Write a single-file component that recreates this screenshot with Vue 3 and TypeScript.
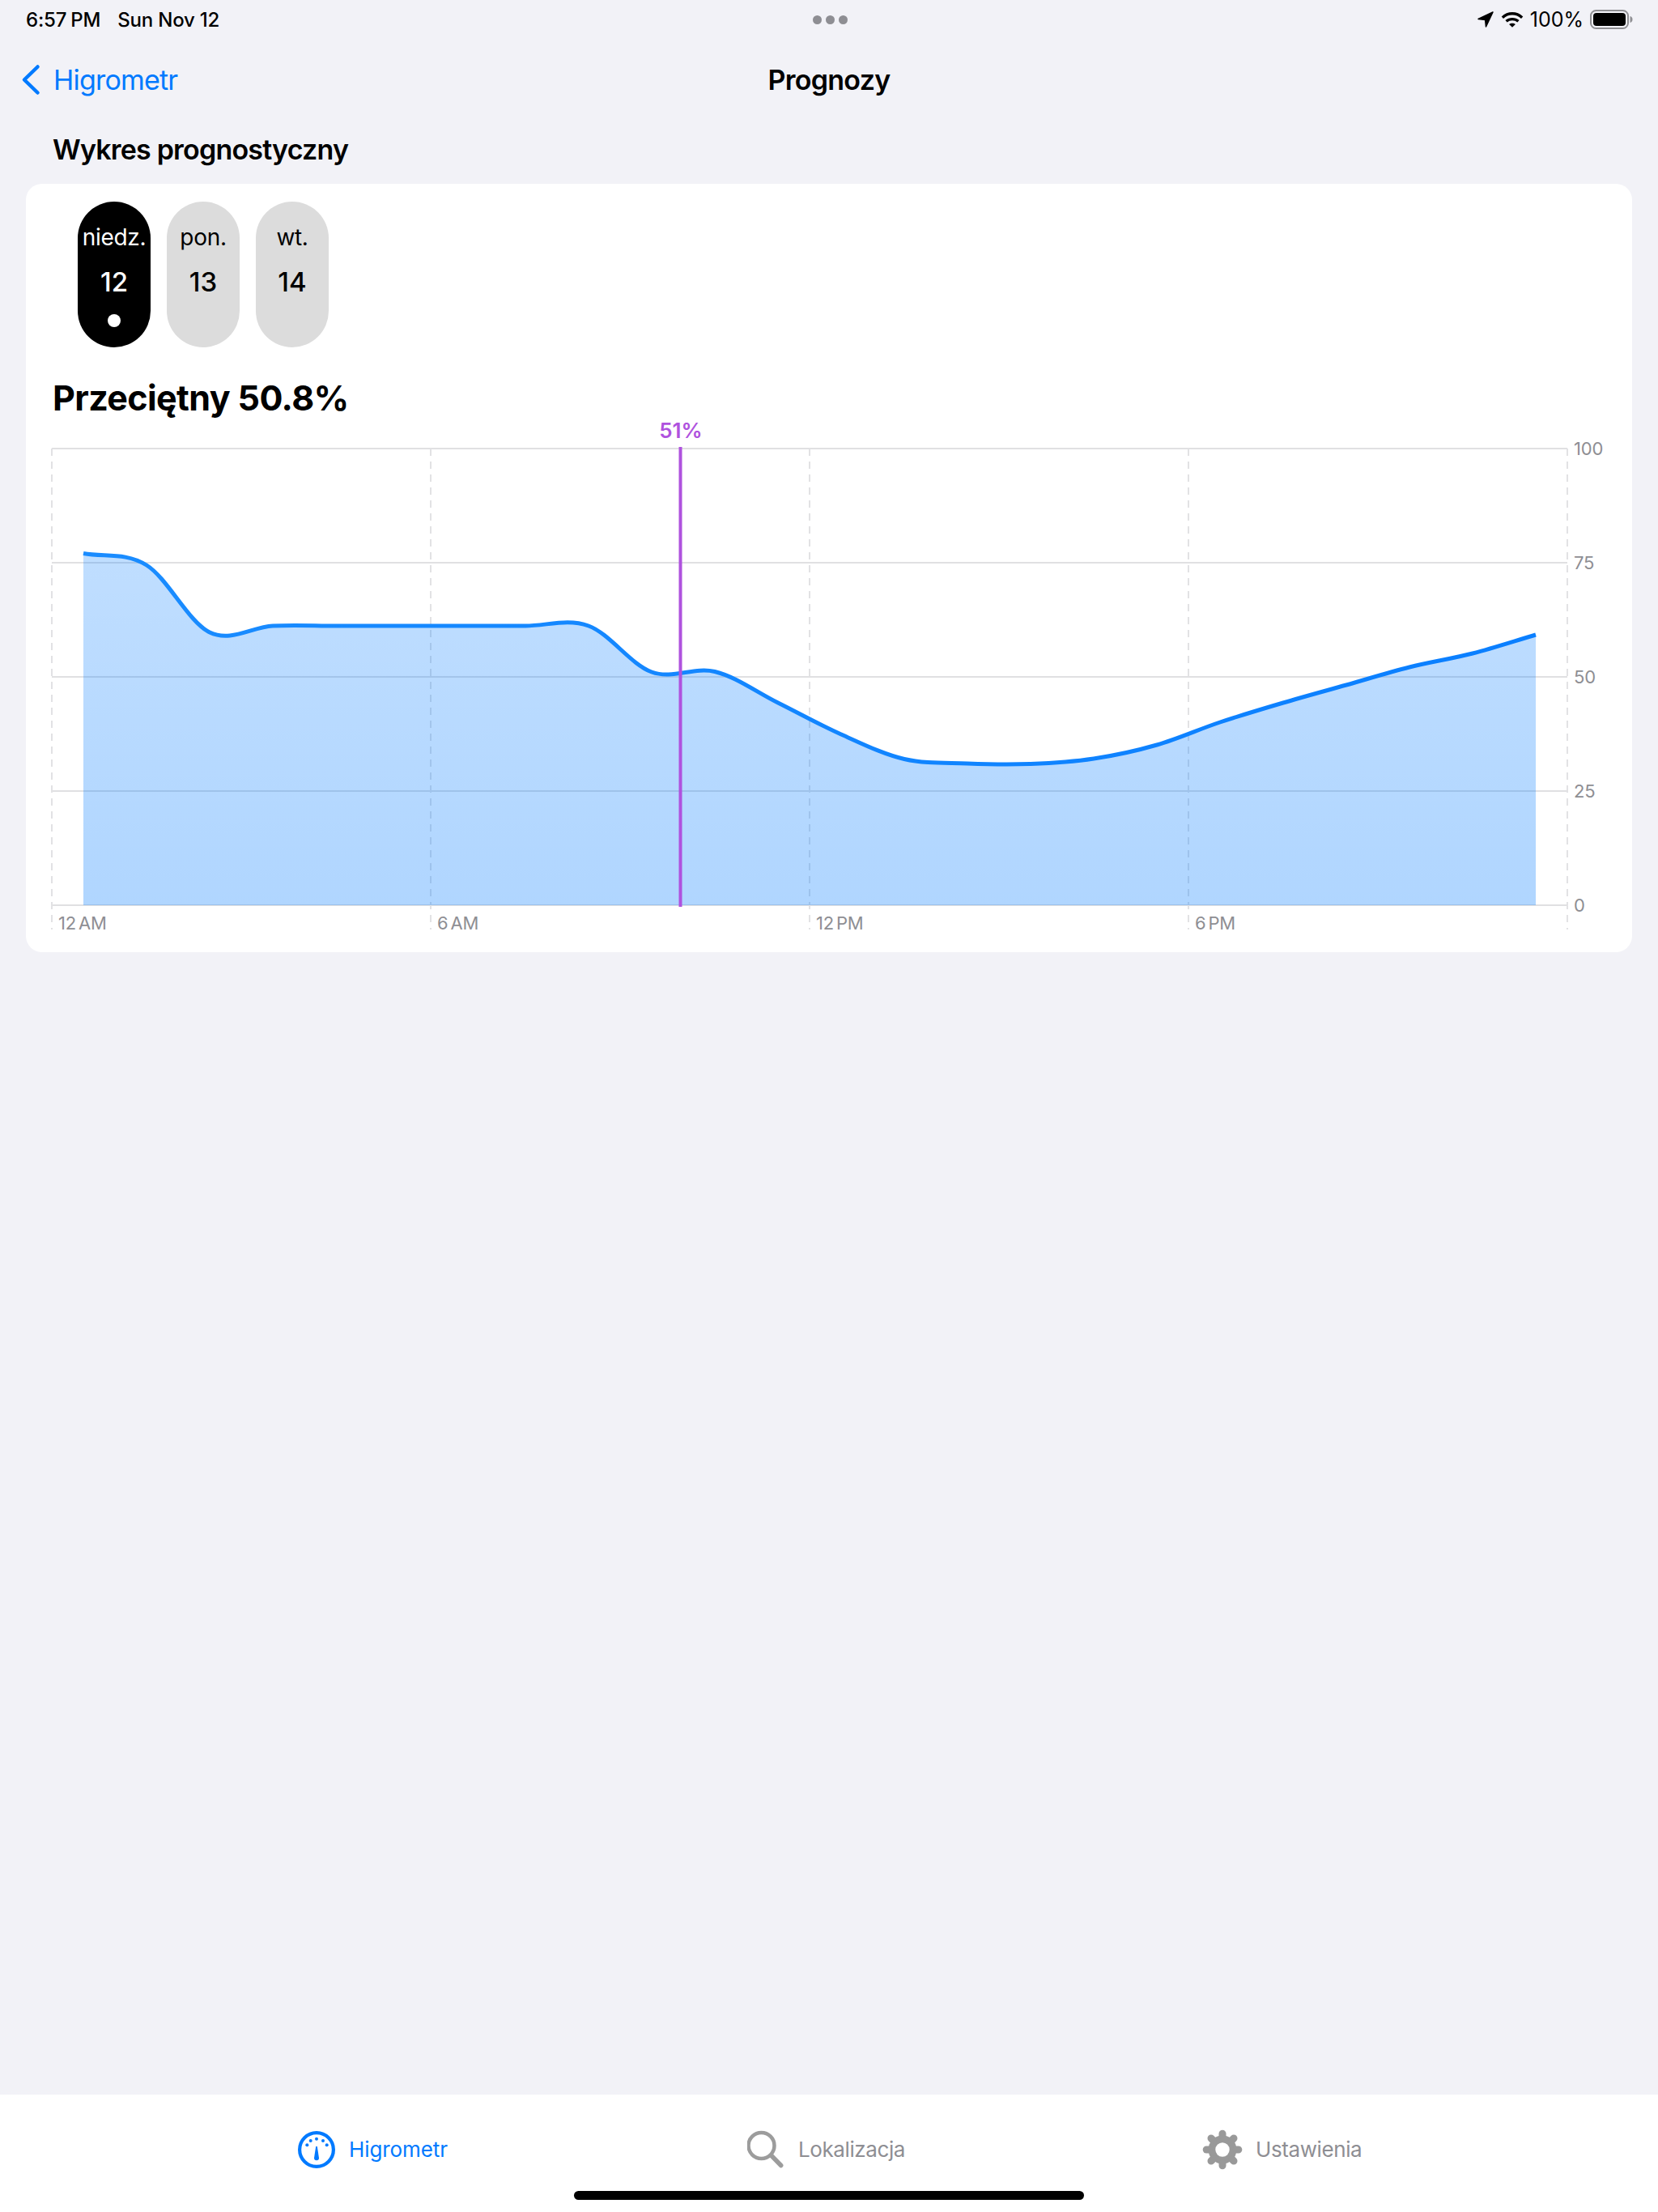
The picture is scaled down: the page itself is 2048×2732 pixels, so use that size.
<script setup lang="ts">
const values: number[] = [683.5, 698, 781, 773, 773, 773, 773, 773, 773, 830, 829.5, 868, 907, 937.5, 943, 943.5, 937, 920, 892, 868, 846, 824, 807, 784]
const hourX = (i: number) => 103 + 78 * i
const last = values.length - 1
const at = (i: number) => {
  if (i < 0) return 2 * values[0] - values[1]
  if (i > last) return 2 * values[last] - values[last - 1]
  return values[i]
}
let linePath = `M${hourX(0)} ${values[0]}`
for (let i = 0; i < last; i++) {
  const x1 = hourX(i)
  const x2 = hourX(i + 1)
  linePath += ` C${x1 + 26} ${at(i) + (at(i + 1) - at(i - 1)) / 6} ${x2 - 26} ${at(i + 1) - (at(i + 2) - at(i)) / 6} ${x2} ${at(i + 1)}`
}
const areaPath = `${linePath} L1897 1118 L103 1118 Z`

const days = [
  { name: 'niedz.', num: '12', active: true },
  { name: 'pon.', num: '13', active: false },
  { name: 'wt.', num: '14', active: false },
]
const hLines = [
  { y: 554, label: '100' },
  { y: 695, label: '75' },
  { y: 836, label: '50' },
  { y: 977, label: '25' },
  { y: 1118, label: '0' },
]
const vLines = [64, 532, 1000, 1468, 1936]
const xLabels = [
  { x: 72, label: '12 AM' },
  { x: 540, label: '6 AM' },
  { x: 1008, label: '12 PM' },
  { x: 1476, label: '6 PM' },
]
const gearTeeth = [0, 45, 90, 135, 180, 225, 270, 315]
</script>

<template>
  <div class="page">
    <header class="status">
      <div class="status-left">
        <span class="time">6:57 PM</span>
        <span>Sun Nov 12</span>
      </div>
      <div class="status-dots"><i></i><i></i><i></i></div>
      <div class="status-right">
        <svg width="20" height="20" viewBox="0 0 20 20"><path d="M19 1 L1 9.5 L9.6 10.4 L10.5 19 Z" fill="#000" stroke="#000" stroke-width="1.5" stroke-linejoin="round"/></svg>
        <svg class="wifi" width="28" height="21" viewBox="0 0 30 22" fill="none" stroke="#000" stroke-width="3.6">
          <path d="M2 8 C9.5 1 20.500 1 28 8"/>
          <path d="M7 13 C11.500 9 18.500 9 23 13"/>
          <path d="M15 21 L10.800 16.800 C13 15 17 15 19.200 16.800 Z" fill="#000" stroke="none"/>
        </svg>
        <span class="pct">100%</span>
        <svg width="54" height="24" viewBox="0 0 54 24">
          <rect x="1" y="1" width="46" height="22" rx="6.500" fill="none" stroke="#8f8f93" stroke-width="2"/>
          <rect x="4" y="4" width="40" height="16" rx="4" fill="#000"/>
          <path d="M49.500 8 C51.500 8.500 52.500 10 52.500 12 C52.500 14 51.500 15.500 49.500 16 Z" fill="#8f8f93"/>
        </svg>
      </div>
    </header>

    <nav class="navbar">
      <div class="back">
        <svg width="24" height="38" viewBox="0 0 24 38" fill="none" stroke="#007aff" stroke-width="4.500" stroke-linecap="round" stroke-linejoin="round"><path d="M20.500 3 L4 19 L20.500 35"/></svg>
        <span>Higrometr</span>
      </div>
      <div class="nav-title">Prognozy</div>
    </nav>

    <h2 class="section-title">Wykres prognostyczny</h2>

    <section class="card">
      <div class="days">
        <div v-for="d in days" :key="d.num" class="day" :class="{ active: d.active }">
          <span class="day-name">{{ d.name }}</span>
          <span class="day-num">{{ d.num }}</span>
          <span v-if="d.active" class="day-dot"></span>
        </div>
      </div>
      <div class="average">Przeciętny 50.8%</div>
      <svg class="chart" width="1984" height="648" viewBox="32 512 1984 648">
        <defs>
          <linearGradient id="areaFill" x1="0" y1="683" x2="0" y2="1118" gradientUnits="userSpaceOnUse">
            <stop offset="0" stop-color="#007aff" stop-opacity="0.25"/>
            <stop offset="1" stop-color="#007aff" stop-opacity="0.31"/>
          </linearGradient>
          <linearGradient id="lineStroke" x1="103" y1="0" x2="1897" y2="0" gradientUnits="userSpaceOnUse">
            <stop offset="0" stop-color="#1a8cff"/>
            <stop offset="1" stop-color="#0a7fff"/>
          </linearGradient>
        </defs>
        <line v-for="l in hLines" :key="l.y" x1="64" x2="1936" :y1="l.y" :y2="l.y" class="grid-h"/>
        <line v-for="x in vLines" :key="x" :x1="x" :x2="x" y1="554" y2="1148" class="grid-v"/>
        <path :d="areaPath" fill="url(#areaFill)"/>
        <path :d="linePath" fill="none" stroke="url(#lineStroke)" stroke-width="5" stroke-linejoin="round"/>
        <line x1="840.500" x2="840.500" y1="552" y2="1120" stroke="#af52de" stroke-width="4"/>
        <text x="841" y="541" text-anchor="middle" class="selected">51%</text>
        <text v-for="l in hLines" :key="l.label" x="1944" :y="l.y + 8" class="axis">{{ l.label }}</text>
        <text v-for="l in xLabels" :key="l.label" :x="l.x" y="1148" class="axis">{{ l.label }}</text>
      </svg>
    </section>

    <footer class="tabbar">
      <div class="tab tab-1 selected-tab">
        <svg width="48" height="48" viewBox="0 0 48 48">
          <circle cx="24" cy="24" r="20.900" fill="none" stroke="#007aff" stroke-width="4.200"/>
          <g fill="#007aff">
            <circle cx="12.300" cy="18.300" r="2"/>
            <circle cx="16.700" cy="13" r="2"/>
            <circle cx="24" cy="10.700" r="2"/>
            <circle cx="32" cy="13" r="2"/>
            <circle cx="36.700" cy="18.300" r="2"/>
            <path d="M23.200 20 L24.800 20 L27 34.300 A3 3 0 0 1 21 34.300 Z"/>
          </g>
        </svg>
        <span>Higrometr</span>
      </div>
      <div class="tab tab-2">
        <svg width="48" height="48" viewBox="0 0 48 48" fill="none" stroke="#9c9c9c" stroke-linecap="round">
          <circle cx="17.500" cy="19" r="16" stroke-width="4.500"/>
          <path d="M29.500 31 L41.700 43.500" stroke-width="5.500"/>
        </svg>
        <span>Lokalizacja</span>
      </div>
      <div class="tab tab-3">
        <svg width="50" height="50" viewBox="0 0 50 50">
          <circle cx="25" cy="25" r="17.500" fill="#999"/>
          <line v-for="a in gearTeeth" :key="a" x1="25" y1="8" x2="25" y2="5.200" stroke="#999" stroke-width="9" stroke-linecap="round" :transform="`rotate(${a} 25 25)`"/>
          <circle cx="25" cy="25" r="8.700" fill="#fff"/>
        </svg>
        <span>Ustawienia</span>
      </div>
      <div class="home"></div>
    </footer>
  </div>
</template>

<style>
html, body { margin: 0; background: #f2f2f7; }
</style>

<style scoped>
.page {
  width: 2048px;
  height: 2732px;
  background: #f2f2f7;
  display: flex;
  flex-direction: column;
  font-family: Inter, "Liberation Sans", sans-serif;
  color: #000;
  position: relative;
  overflow: hidden;
}
.status {
  height: 48px;
  padding: 0 30px 0 32px;
  display: grid;
  grid-template-columns: 1fr auto 1fr;
  align-items: center;
  font-size: 24px;
  font-weight: 500;
  letter-spacing: -0.2px;
}
.status-left { display: flex; gap: 21px; }
.time { word-spacing: -1px; }
.status-dots { display: flex; gap: 5px; }
.status-dots i { width: 11px; height: 11px; border-radius: 50%; background: #8e8e93; }
.status-right { display: flex; align-items: center; justify-content: flex-end; gap: 8px; }
.wifi { margin-left: 1px; }
.pct { font-weight: 400; font-size: 25px; letter-spacing: 0; }
.navbar {
  height: 100px;
  display: flex;
  align-items: center;
  justify-content: center;
  position: relative;
}
.back {
  position: absolute;
  left: 26px;
  top: 50%;
  transform: translateY(-50%);
  display: flex;
  align-items: center;
  gap: 16px;
  color: #007aff;
  font-size: 34px;
  letter-spacing: -0.8px;
}
.nav-title { font-size: 34px; font-weight: 600; letter-spacing: -0.7px; }
.section-title {
  margin: 0;
  padding: 16px 0 0 65px;
  font-size: 34px;
  line-height: 42px;
  font-weight: 600;
  letter-spacing: -0.8px;
}
.card {
  margin: 21px 32px 0;
  background: #fff;
  border-radius: 20px;
  padding: 22px 0 16px;
}
.days { display: flex; gap: 20px; padding-left: 64px; }
.day {
  width: 90px;
  height: 180px;
  border-radius: 45px;
  background: #dcdcdc;
  display: flex;
  flex-direction: column;
  align-items: center;
  position: relative;
  font-size: 28px;
}
.day.active { background: #000; color: #fff; }
.day-name { margin-top: 26px; line-height: 36px; letter-spacing: -0.3px; white-space: nowrap; }
.day-num { margin-top: 17px; line-height: 40px; font-size: 33px; font-weight: 500; }
.day-dot {
  position: absolute;
  left: 37px;
  top: 139px;
  width: 16px;
  height: 16px;
  border-radius: 50%;
  background: #fff;
}
.average {
  margin: 41px 0 0 33px;
  font-size: 43px;
  line-height: 42px;
  font-weight: 700;
  letter-spacing: -0.6px;
}
.chart { display: block; }
.grid-h { stroke: #e0e0e2; stroke-width: 2; }
.grid-v { stroke: #e2e2e4; stroke-width: 2; stroke-dasharray: 9 7; }
.selected { fill: #af52de; font-size: 26px; font-weight: 600; }
.axis { fill: #8e8e93; font-size: 22px; letter-spacing: -0.2px; word-spacing: -3px; }
.tabbar {
  margin-top: auto;
  height: 145px;
  background: #fff;
  position: relative;
}
.tab {
  position: absolute;
  top: 43px;
  display: flex;
  align-items: center;
  gap: 16px;
  font-size: 26px;
  letter-spacing: -0.4px;
  color: #8e8e93;
  height: 50px;
}
.tab span { margin-bottom: 2px; }
.selected-tab { color: #007aff; letter-spacing: -0.1px; }
.tab-1 { left: 367px; }
.tab-2 { left: 923px; gap: 15px; }
.tab-3 { left: 1485px; }
.home {
  position: absolute;
  left: 709px;
  top: 119px;
  width: 630px;
  height: 11px;
  border-radius: 6px;
  background: #000;
}
</style>
